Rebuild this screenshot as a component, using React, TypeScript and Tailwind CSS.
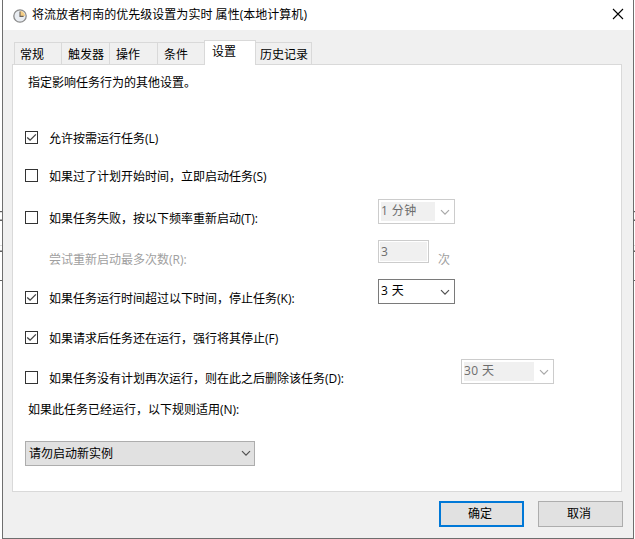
import React from "react";

const Chevron = ({ className }: { className: string }) => (
    <svg className={className} width="10" height="7" viewBox="0 0 10 7" fill="none">
        <path d="M1 1.2L5 5.2L9 1.2" stroke="currentColor" strokeWidth="1.2" />
    </svg>
);

const ClockIcon = () => (
    <svg className="mt-px shrink-0" width="14" height="14" viewBox="0 0 14 14" fill="none">
        <circle cx="7" cy="7" r="6.2" fill="#e9edf2" stroke="#8b8b8b" strokeWidth="1.3" />
        <path d="M7 7V2A5 5 0 0 1 12 7Z" fill="#f6cf86" />
        <path d="M7 2.5V7.4H10.6" stroke="#6b6259" strokeWidth="1.1" />
    </svg>
);

const CheckBox = ({ checked }: { checked?: boolean }) => (
    <span className="mt-3 flex h-[13px] w-[13px] shrink-0 border border-[#333333] bg-white">
        {checked && (
            <svg width="11" height="11" viewBox="0 0 11 11" fill="none">
                <path d="M1.2 5.4L4.1 8.1L9.9 2.4" stroke="#444444" strokeWidth="1.3" />
            </svg>
        )}
    </span>
);

type OptionProps = {
    text: string;
    checked?: boolean;
    height: string;
    labelWidth?: string;
    children?: React.ReactNode;
};

const Option = ({ text, checked, height, labelWidth = "w-[329px]", children }: OptionProps) => (
    <div className={`flex items-start ${height}`}>
        <CheckBox checked={checked} />
        <span className={`ml-[11px] mt-3 shrink-0 ${labelWidth}`}>{text}</span>
        {children}
    </div>
);

type ComboProps = {
    value: string;
    width: string;
    disabled?: boolean;
};

const Combo = ({ value, width, disabled }: ComboProps) => (
    <div
        className={`flex h-[25px] shrink-0 justify-between border bg-white p-[2px] pr-1 ${width} ${
            disabled ? "border-[#cccccc] text-[#6d6d6d]" : "border-[#7a7a7a] text-black"
        }`}
    >
        <span
            className={`mr-[5px] h-[19px] flex-1 leading-[18px] tracking-[0.4px] ${disabled ? "bg-[#f0f0f0]" : ""}`}
        >
            {value}
        </span>
        <Chevron className={`mt-[7px] ${disabled ? "text-[#a8a8a8]" : "text-[#505050]"}`} />
    </div>
);

const TABS = [
    { name: "常规", width: "w-[47px]", pad: "pl-[5px]" },
    { name: "触发器", width: "w-[48px]", pad: "pl-[6px]" },
    { name: "操作", width: "w-[48px]", pad: "pl-[6px]" },
    { name: "条件", width: "w-[47px]", pad: "pl-[6px]" },
    { name: "设置", width: "w-[52px]", pad: "pl-[7px]", active: true },
    { name: "历史记录", width: "w-[56px]", pad: "pl-1" },
];

const Tabs = () => (
    <div className="flex h-[25px] items-end pl-[2px]">
        {TABS.map((tab) =>
            tab.active ? (
                <div
                    key={tab.name}
                    className={`z-10 h-[25px] border border-b-0 border-[#d9d9d9] bg-white leading-[22px] ${tab.width} ${tab.pad}`}
                >
                    {tab.name}
                </div>
            ) : (
                <div
                    key={tab.name}
                    className={`h-[23px] whitespace-nowrap border-l border-t border-[#d9d9d9] leading-[23px] last:border-l-0 last:border-r ${tab.width} ${tab.pad}`}
                >
                    {tab.name}
                </div>
            )
        )}
    </div>
);

/* window behind the dialog, only its rules show at the edges */
const Behind = ({ className }: { className: string }) => (
    <div className={`flex shrink-0 flex-col bg-white pt-[211px] ${className}`}>
        <div className="h-px bg-[#606060]" />
        <div className="h-px bg-[#dddddd]" />
        <div className="h-[6px]" />
        <div className="h-px bg-[#b0b0b0]" />
        <div className="h-px bg-[#606060]" />
        <div className="h-[24px]" />
        <div className="h-px bg-[#dddddd]" />
        <div className="h-[4px]" />
        <div className="h-px bg-[#b0b0b0]" />
        <div className="h-px bg-[#606060]" />
        <div className="h-[28px]" />
        <div className="h-px bg-[#606060]" />
    </div>
);

const App = () => {
    return (
        <div
            lang="zh-CN"
            className="flex h-[539px] w-[635px] overflow-hidden bg-white font-['Open_Sans','Noto_Sans_CJK_SC',sans-serif] text-[12px] leading-4 text-black"
        >
            <Behind className="w-[2px]" />
            <div className="flex w-[632px] flex-col border border-t-0 border-[#6e6e6e] bg-[#f0f0f0]">
                <div className="flex h-[30px] shrink-0 items-center justify-between bg-white pl-[10px] pr-[9px]">
                    <div className="flex items-center gap-[5px]">
                        <ClockIcon />
                        <span className="tracking-[0.03px]">将流放者柯南的优先级设置为实时 属性(本地计算机)</span>
                    </div>
                    <svg className="-mt-[2px]" width="12" height="12" viewBox="0 0 12 12" fill="none">
                        <path d="M1 1L11 11M11 1L1 11" stroke="#000000" strokeWidth="1.1" />
                    </svg>
                </div>

                <div className="px-[9px] pr-[11px] pt-[10px]">
                    <Tabs />
                    <div className="-mt-px h-[428px] border border-[#d9d9d9] bg-white pl-3">
                        <p className="h-[54px] pl-[3px] pt-[10px]">指定影响任务行为的其他设置。</p>
                        <Option text="允许按需运行任务(L)" checked height="h-[38px]" />
                        <Option text="如果过了计划开始时间，立即启动任务(S)" height="h-[42px]" />
                        <Option text="如果任务失败，按以下频率重新启动(T):" height="h-[41px]">
                            <Combo value="1 分钟" width="w-[77px]" disabled />
                        </Option>
                        <div className="flex h-[39px] items-start pl-6 text-[#a0a0a0]">
                            <span className="mt-3 w-[329px]">尝试重新启动最多次数(R):</span>
                            <div className="h-[23px] w-[51px] border border-[#cccccc] bg-white p-px text-[#6d6d6d]">
                                <div className="h-[19px] bg-[#f0f0f0] pl-px leading-[19px]">3</div>
                            </div>
                            <span className="ml-[9px] mt-3">次</span>
                        </div>
                        <Option text="如果任务运行时间超过以下时间，停止任务(K):" checked height="h-[40px]">
                            <Combo value="3 天" width="w-[77px]" />
                        </Option>
                        <Option text="如果请求后任务还在运行，强行将其停止(F)" checked height="h-[40px]" />
                        <Option
                            text="如果任务没有计划再次运行，则在此之后删除该任务(D):"
                            height="h-[40px]"
                            labelWidth="w-[412px]"
                        >
                            <Combo value="30 天" width="w-[93px]" disabled />
                        </Option>
                        <p className="h-[42px] pl-[3px] pt-[3px]">如果此任务已经运行，以下规则适用(N):</p>
                        <div className="flex h-[25px] w-[230px] items-center justify-between border border-[#adadad] bg-[#e1e1e1] pl-[3px] pr-[3px]">
                            <span>请勿启动新实例</span>
                            <Chevron className="text-[#505050]" />
                        </div>
                    </div>
                </div>

                <div className="mt-[9px] flex justify-end gap-[14px] pr-[10px]">
                    <button className="h-[26px] w-[85px] border-2 border-[#0078d7] bg-[#e1e1e1] pr-[3px]">确定</button>
                    <button className="h-[26px] w-[85px] border border-[#adadad] bg-[#e1e1e1] pr-[3px]">取消</button>
                </div>
            </div>
            <Behind className="w-px" />
        </div>
    );
};

export default App;
